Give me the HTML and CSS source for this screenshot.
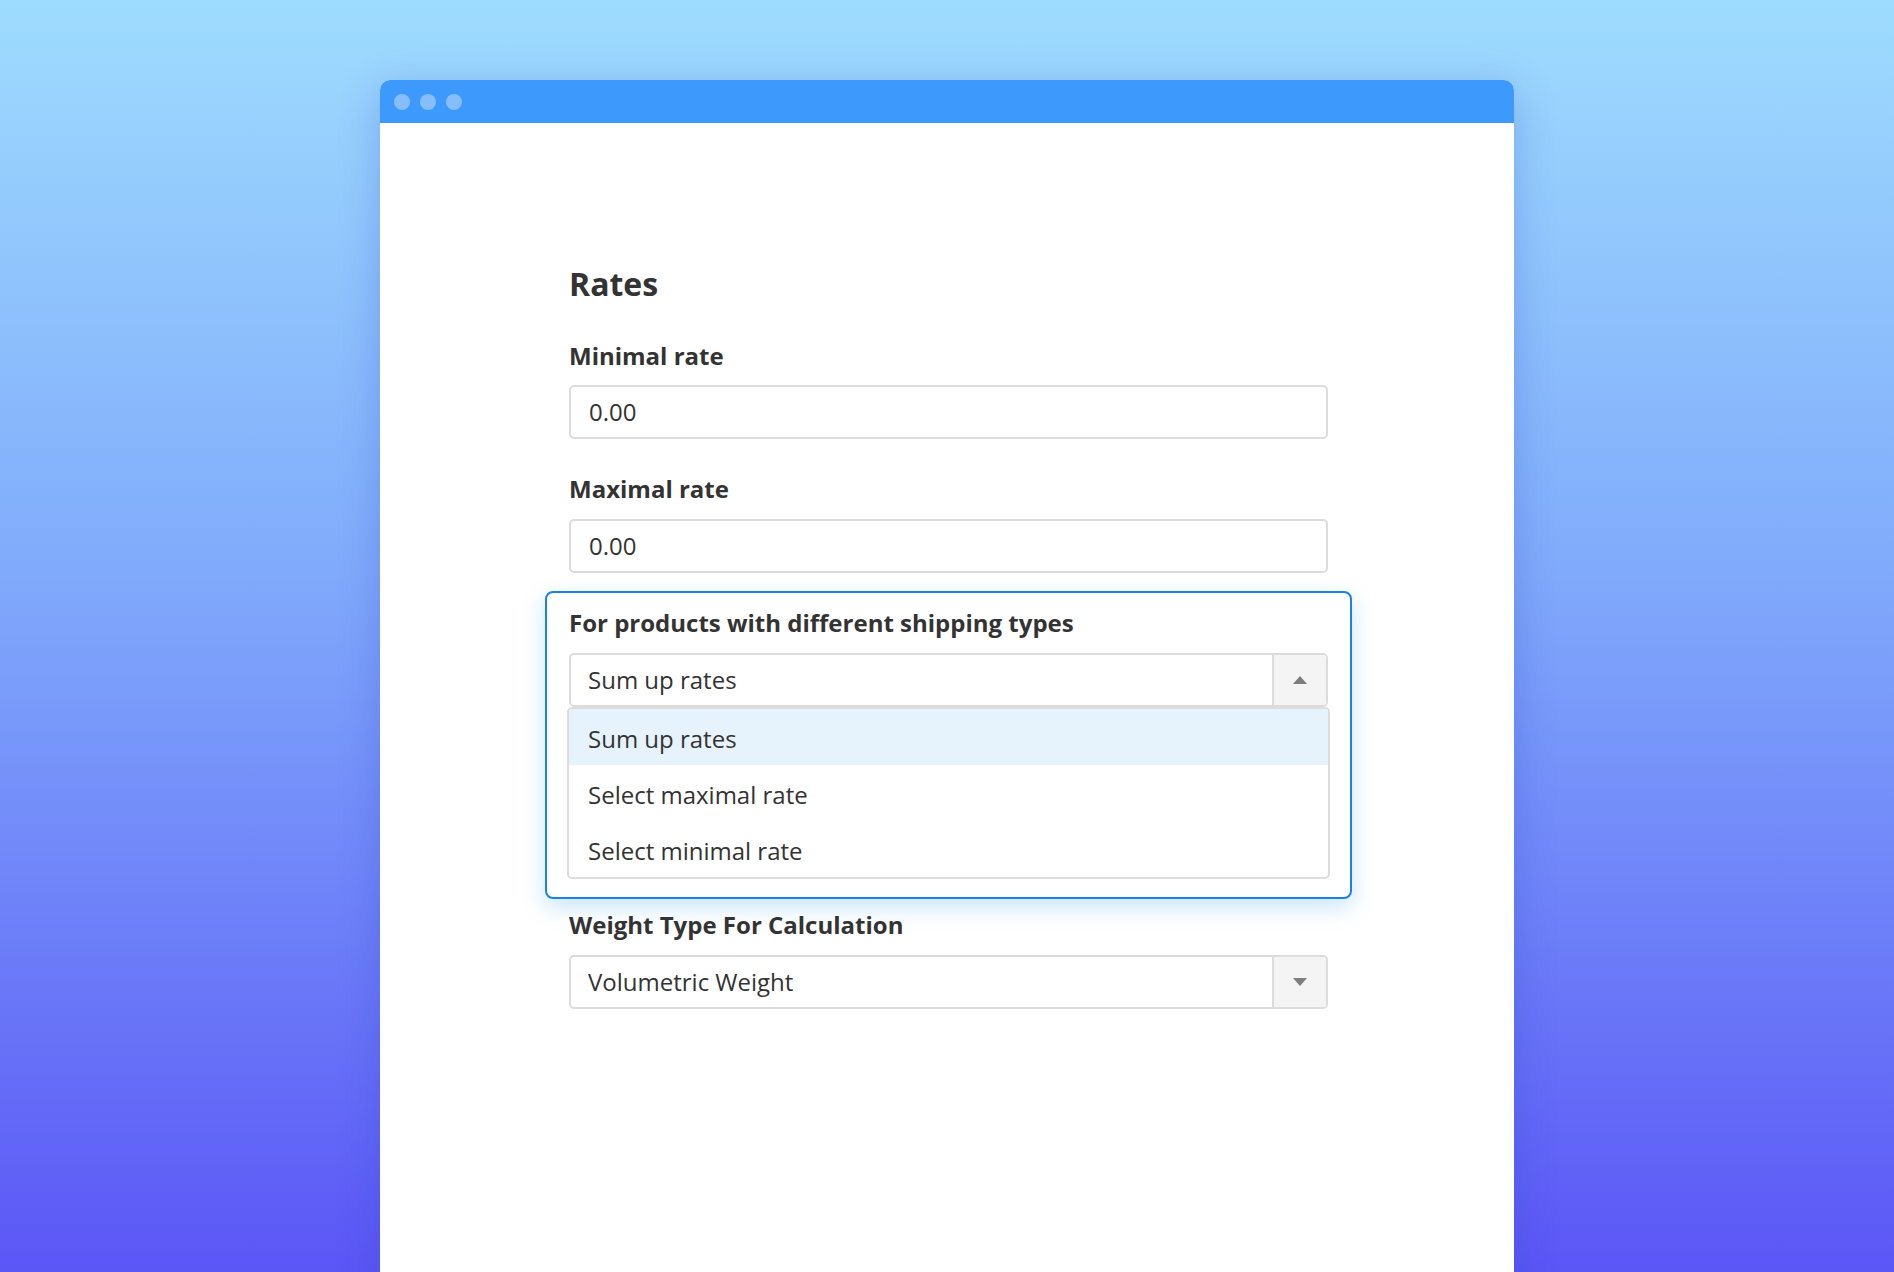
FILE: index.html
```html
<!DOCTYPE html>
<html lang="en">
<head>
<meta charset="utf-8">
<title>Rates</title>
<link rel="stylesheet" href="styles.css">
</head>
<body>
<div class="window">
  <div class="titlebar">
    <span class="dot"></span><span class="dot"></span><span class="dot"></span>
  </div>
  <div class="content">
    <h2 class="heading">Rates</h2>

    <div class="label first">Minimal rate</div>
    <div class="input">0.00</div>

    <div class="label">Maximal rate</div>
    <div class="input">0.00</div>

    <div class="card">
      <div class="label card-label">For products with different shipping types</div>
      <div class="select">
        <div class="select-value">Sum up rates</div>
        <div class="select-btn"><span class="tri up"></span></div>
      </div>
      <ul class="options">
        <li class="option active">Sum up rates</li>
        <li class="option">Select maximal rate</li>
        <li class="option">Select minimal rate</li>
      </ul>
    </div>

    <div class="label after-card">Weight Type For Calculation</div>
    <div class="select">
      <div class="select-value">Volumetric Weight</div>
      <div class="select-btn"><span class="tri down"></span></div>
    </div>
  </div>
</div>
</body>
</html>
```
FILE: styles.css
```css
* { box-sizing: border-box; }
html, body { margin: 0; padding: 0; }
body {
  width: 1894px;
  height: 1272px;
  overflow: hidden;
  font-family: "Open Sans", "Liberation Sans", sans-serif;
  color: #333;
  background: linear-gradient(180deg, #9edcfe 0%, #80aafb 45%, #5b56f6 100%);
}
.window {
  width: 1134px;
  height: 1220px;
  margin: 80px 0 0 380px;
  background: #fff;
  border-radius: 10px 10px 0 0;
  box-shadow: 0 10px 40px rgba(40, 70, 190, 0.28);
  overflow: hidden;
}
.titlebar {
  height: 43px;
  background: #3d99fc;
  display: flex;
  align-items: center;
  gap: 10px;
  padding-left: 14px;
}
.dot {
  width: 16px;
  height: 16px;
  border-radius: 50%;
  background: #86bdfb;
}
.content {
  width: 759px;
  margin: 0 0 0 189px;
  padding-top: 141px;
}
.heading {
  margin: 0;
  font-size: 32px;
  line-height: 40px;
  font-weight: 700;
  color: #333;
}
.label {
  font-size: 24px;
  line-height: 30px;
  font-weight: 700;
  color: #333;
  margin: 35px 0 15px;
}
.label.first { margin-top: 37px; margin-bottom: 14px; }
.input, .select {
  height: 54px;
  border: 2px solid #dcdcdc;
  border-radius: 5px;
  background: #fff;
  font-size: 24px;
  line-height: 50px;
  color: #333;
}
.input { padding-left: 18px; }
.select {
  display: flex;
  overflow: hidden;
}
.select-value {
  flex: 1;
  padding-left: 17px;
}
.select-btn {
  width: 54px;
  border-left: 2px solid #dcdcdc;
  background: #f4f4f4;
  display: flex;
  align-items: center;
  justify-content: center;
}
.tri {
  width: 0;
  height: 0;
  border-left: 7px solid transparent;
  border-right: 7px solid transparent;
}
.tri.up { border-bottom: 8px solid #7d7d7d; }
.tri.down { border-top: 8px solid #7d7d7d; }
.card {
  margin: 18px -24px 0;
  padding: 15px 22px 18px;
  border: 2px solid #1a82e4;
  border-radius: 8px;
  background: #fff;
  box-shadow: 0 8px 22px rgba(40, 150, 245, 0.25);
}
.card-label { margin-top: 0; }
.options {
  list-style: none;
  margin: 0 -2px;
  padding: 0;
  border: 2px solid #dcdcdc;
  border-radius: 5px;
  overflow: hidden;
  background: #fff;
}
.option {
  height: 56px;
  padding-top: 3px;
  line-height: 53px;
  font-size: 24px;
  padding-left: 19px;
  color: #333;
}
.option.active { background: #e6f3fd; }
.label.after-card { margin-top: 11px; }
```
